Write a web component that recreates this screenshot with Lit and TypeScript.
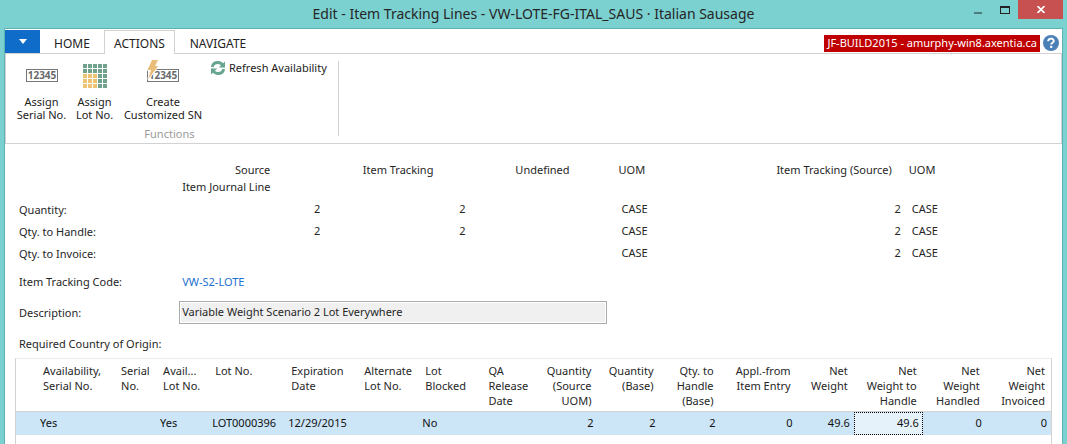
import { LitElement, html, css, svg } from "lit";
import { customElement } from "lit/decorators.js";
import { classMap } from "lit/directives/class-map.js";

interface Column {
  lines: string[];
  width: number;
  value: string;
  right?: boolean;
  focused?: boolean;
}

const COLUMNS: Column[] = [
  { lines: [], width: 21, value: "" },
  { lines: ["Availability,", "Serial No."], width: 78, value: "Yes" },
  { lines: ["Serial", "No."], width: 42, value: "" },
  { lines: ["Avail...", "Lot No."], width: 52, value: "Yes" },
  { lines: ["Lot No."], width: 76, value: "LOT0000396" },
  { lines: ["Expiration", "Date"], width: 73, value: "12/29/2015" },
  { lines: ["Alternate", "Lot No."], width: 61, value: "" },
  { lines: ["Lot", "Blocked"], width: 63, value: "No" },
  { lines: ["QA", "Release", "Date"], width: 53, value: "" },
  { lines: ["Quantity", "(Source", "UOM)"], width: 62, value: "2", right: true },
  { lines: ["Quantity", "(Base)"], width: 62, value: "2", right: true },
  { lines: ["Qty. to", "Handle", "(Base)"], width: 60, value: "2", right: true },
  { lines: ["Appl.-from", "Item Entry"], width: 77, value: "0", right: true },
  { lines: ["Net", "Weight"], width: 57, value: "49.6", right: true },
  { lines: ["Net", "Weight to", "Handle"], width: 69, value: "49.6", right: true, focused: true },
  { lines: ["Net", "Weight", "Handled"], width: 63, value: "0", right: true },
  { lines: ["Net", "Weight", "Invoiced"], width: 65, value: "0", right: true },
];

const SUMMARY = [
  { label: "Quantity:", source: "2", tracking: "2", tracked: "2" },
  { label: "Qty. to Handle:", source: "2", tracking: "2", tracked: "2" },
  { label: "Qty. to Invoice:", source: "", tracking: "", tracked: "2" },
];

const serialPlate = svg`
  <rect x="0.5" y="5.5" width="31" height="12" fill="#fff" stroke="#777"/>
  <text x="16" y="15" text-anchor="middle" font-family="Open Sans, sans-serif"
    font-size="10" font-weight="700" fill="#6a6a6a">12345</text>`;

const serialIcon = html`<svg width="32" height="24" viewBox="0 0 32 24" aria-hidden="true">${serialPlate}</svg>`;

const customIcon = html`<svg width="32" height="24" viewBox="0 0 32 24" aria-hidden="true" overflow="visible">
  ${serialPlate}
  <path d="M5-4H11L8 2H11.2L1 15.5L4 6H0.5Z" fill="#e9bd78" stroke="#fff" stroke-width="1.6" paint-order="stroke"/>
</svg>`;

const lotIcon = html`<svg width="24" height="24" viewBox="0 0 24 24" aria-hidden="true">
  ${[0, 1, 2, 3, 4].flatMap((row) =>
    [0, 1, 2, 3, 4].map(
      (col) => svg`<rect x=${col * 5} y=${row * 5} width="4" height="4"
        fill=${row > 1 && col < 3 ? "#eec374" : "#6fa18d"}/>`
    )
  )}
</svg>`;

const refreshIcon = html`<svg width="14" height="14" viewBox="0 0 14 14" aria-hidden="true">
  <path d="M1.3 6C1.8 3 4.2 1.5 7 1.5C9 1.5 10.5 2.4 11.5 4" fill="none" stroke="#67a58f" stroke-width="2.8"/>
  <path d="M14 0.4V6.4H7.8Z" fill="#67a58f"/>
  <path d="M12.7 8C12.2 11 9.8 12.5 7 12.5C5 12.5 3.5 11.6 2.5 10" fill="none" stroke="#67a58f" stroke-width="2.8"/>
  <path d="M0 13.6V7.6H6.2Z" fill="#67a58f"/>
</svg>`;

@customElement("app-root")
export class AppRoot extends LitElement {
  static styles = css`
    :host {
      display: block;
      font-family: "Noto Sans", "Open Sans", sans-serif;
      font-size: 11px;
      line-height: 16px;
      color: #262626;
    }
    * { box-sizing: border-box; }
    button, input {
      font: inherit;
      color: inherit;
      margin: 0;
      padding: 0;
      border: 0;
      background: none;
      border-radius: 0;
    }
    svg { display: block; flex: none; }
    .window {
      min-height: 100vh;
      background: #7bd0d0;
      display: flex;
      flex-direction: column;
    }
    .titlebar {
      display: grid;
      grid-template-columns: 1fr auto 1fr;
      height: 28px;
      padding: 0 4px;
    }
    .title {
      grid-column: 2;
      margin: 0;
      font-size: 14px;
      font-weight: 400;
      line-height: 28px;
      white-space: nowrap;
    }
    .controls {
      display: flex;
      justify-content: flex-end;
      align-items: flex-start;
    }
    .control {
      width: 27px;
      height: 19px;
      display: grid;
      place-items: center;
    }
    .close { width: 45px; background: #c75050; }
    .client {
      flex: 1;
      display: flex;
      flex-direction: column;
      margin: 0 4px;
      border: 1px solid #5fb2b2;
      border-bottom: 0;
      background: #fff;
    }
    .tabs {
      display: flex;
      height: 25px;
      padding-top: 1px;
      border-bottom: 1px solid #d2d2d2;
      color: #222;
    }
    .file {
      width: 35px;
      display: grid;
      place-items: center;
      background: #0f6cc8;
    }
    .tab { height: 24px; padding: 3px 0 0; color: #222; font-size: 12px; }
    .home { width: 64px; }
    .actions {
      width: 71px;
      border: 1px solid #d2d2d2;
      border-bottom: 0;
      background: #fff;
      padding-top: 2px;
    }
    .navigate { width: 86px; }
    .status {
      margin-left: auto;
      padding: 5px 3px 0 0;
      display: flex;
      gap: 3px;
    }
    .server {
      height: 17px;
      padding: 0 3px;
      background: #c00000;
      color: #fff;
      white-space: nowrap;
    }
    .help { width: 16px; height: 16px; }
    .ribbon {
      display: flex;
      height: 90px;
      border: 1px solid #d2d2d2;
      border-top: 0;
      padding: 7px 0 3px 6px;
      color: #222;
    }
    .group {
      display: flex;
      flex-direction: column;
      justify-content: space-between;
      padding-right: 11px;
    }
    .divider { width: 1px; height: 75px; background: #d2d2d2; }
    .commands { display: flex; align-items: flex-start; height: 63px; }
    .command {
      display: flex;
      flex-direction: column;
      align-items: center;
      gap: 7px;
      padding-top: 3px;
      line-height: 13px;
      white-space: nowrap;
    }
    .serial { width: 59px; }
    .lot { width: 47px; }
    .custom { width: 90px; }
    .refresh {
      display: flex;
      align-items: center;
      gap: 4px;
      padding-left: 3px;
      height: 14px;
      white-space: nowrap;
    }
    .caption { text-align: center; line-height: 12px; color: #9a9a9a; }
    .page { flex: 1; display: flex; flex-direction: column; padding: 18px 10px 0; }
    .form { padding: 0 4px; }
    table { border-collapse: separate; border-spacing: 0; table-layout: fixed; width: 100%; }
    th { font-weight: 400; text-align: left; padding: 0; }
    td { padding: 0; }
    .summary { white-space: nowrap; }
    .summary th, .summary td { height: 22px; }
    .summary thead th { height: 16px; }
    .summary .sub th { height: 21px; vertical-align: bottom; padding-bottom: 4px; }
    .summary td { padding-bottom: 2px; }
    .summary .num { text-align: right; }
    .summary .source-head { text-align: right; padding-right: 50px; }
    .summary .indent-head { text-align: right; padding-right: 32px; }
    .summary .undefined-head { text-align: right; padding-right: 41px; }
    .summary .tracked-head { text-align: right; padding-right: 9px; }
    .summary .uom-head { padding-left: 8px; }
    .summary .uom { padding-left: 11px; }
    .field {
      display: grid;
      grid-template-columns: 160fr 427fr 441fr;
      align-items: center;
    }
    .code { height: 22px; margin-top: 6px; }
    .code a { color: #1a6fd0; text-decoration: none; padding-left: 3px; }
    .description { margin-top: 8px; height: 23px; }
    .description input {
      height: 23px;
      width: 100%;
      border: 1px solid #ababab;
      padding: 0 2px 2px;
      background: #f0f0f0;
      box-shadow: inset 0 0 0 1px #fff;
    }
    .origin { margin: 12px 0 6px; }
    .lines {
      flex: 1;
      border: 1px solid #d2d2d2;
      border-top-color: #ececec;
      border-bottom: 0;
    }
    .lines th {
      height: 53px;
      padding: 4px 6px 3px;
      line-height: 15px;
      vertical-align: top;
      white-space: nowrap;
      border-bottom: 1px solid #d2d2d2;
    }
    .lines td {
      height: 23px;
      padding: 0 4px 2px 3px;
      background: #cce5f7;
      color: #111;
      white-space: nowrap;
    }
    .lines .right { text-align: right; }
    .lines .focused { background: #e5f2fa; border: 1px dotted #000; padding: 0 3px 2px 2px; }
  `;

  render() {
    const total = COLUMNS.reduce((sum, c) => sum + c.width, 0);
    return html`
      <div class="window">
        <header class="titlebar">
          <h1 class="title">Edit - Item Tracking Lines - VW-LOTE-FG-ITAL_SAUS · Italian Sausage</h1>
          <div class="controls">
            <button class="control" aria-label="Minimize">
              <svg width="10" height="10"><rect x="1" y="7" width="8" height="2" fill="#4d7c7c"/></svg>
            </button>
            <button class="control" aria-label="Maximize">
              <svg width="10" height="8"><path d="M0 0H10V8H0ZM1 2V7H9V2Z" fill="#222" fill-rule="evenodd"/></svg>
            </button>
            <button class="control close" aria-label="Close">
              <svg width="8" height="7"><path d="M0.5 0L7.5 7M7.5 0L0.5 7" stroke="#fff" stroke-width="1.7"/></svg>
            </button>
          </div>
        </header>
        <main class="client">
          <nav class="tabs">
            <button class="file" aria-label="Application menu">
              <svg width="8" height="5"><path d="M0 0H8L4 5Z" fill="#fff"/></svg>
            </button>
            <button class="tab home">HOME</button>
            <button class="tab actions">ACTIONS</button>
            <button class="tab navigate">NAVIGATE</button>
            <div class="status">
              <span class="server">JF-BUILD2015 - amurphy-win8.axentia.ca</span>
              <button class="help" aria-label="Help">
                <svg width="16" height="16" viewBox="0 0 16 16">
                  <circle cx="8" cy="8" r="8" fill="#4a7fb8"/>
                  <path d="M5.2 6.2C5.2 2.8 10.8 2.8 10.8 6C10.8 7.8 8.2 7.8 8.2 9.6" fill="none" stroke="#fff" stroke-width="2"/>
                  <rect x="7.1" y="10.8" width="2.2" height="2.1" fill="#fff"/>
                </svg>
              </button>
            </div>
          </nav>
          <section class="ribbon">
            <div class="group">
              <div class="commands">
                <button class="command serial">${serialIcon}<span>Assign<br />Serial No.</span></button>
                <button class="command lot">${lotIcon}<span>Assign<br />Lot No.</span></button>
                <button class="command custom">${customIcon}<span>Create<br />Customized SN</span></button>
                <button class="refresh">${refreshIcon}<span>Refresh Availability</span></button>
              </div>
              <div class="caption">Functions</div>
            </div>
            <div class="divider"></div>
          </section>
          <div class="page">
            <div class="form">
              <table class="summary">
                <colgroup>
                  ${[163, 138, 145, 145, 135, 155, 147].map(
                    (w) => html`<col style="width:${(w / 1028) * 100}%" />`
                  )}
                </colgroup>
                <thead>
                  <tr>
                    <th></th>
                    <th class="source-head">Source</th>
                    <th class="indent-head">Item Tracking</th>
                    <th class="undefined-head">Undefined</th>
                    <th class="uom-head">UOM</th>
                    <th class="tracked-head">Item Tracking (Source)</th>
                    <th class="uom-head">UOM</th>
                  </tr>
                  <tr class="sub">
                    <th></th>
                    <th>Item Journal Line</th>
                    <th colspan="5"></th>
                  </tr>
                </thead>
                <tbody>
                  ${SUMMARY.map(
                    (r) => html`<tr>
                      <th scope="row">${r.label}</th>
                      <td class="num">${r.source}</td>
                      <td class="num">${r.tracking}</td>
                      <td></td>
                      <td class="uom">CASE</td>
                      <td class="num">${r.tracked}</td>
                      <td class="uom">CASE</td>
                    </tr>`
                  )}
                </tbody>
              </table>
              <div class="field code">
                <span>Item Tracking Code:</span>
                <a href="#">VW-S2-LOTE</a>
              </div>
              <div class="field description">
                <label for="description">Description:</label>
                <input id="description" readonly .value=${"Variable Weight Scenario 2 Lot Everywhere"} />
              </div>
              <div class="origin">Required Country of Origin:</div>
            </div>
            <div class="lines">
              <table>
                <colgroup>
                  ${COLUMNS.map((c) => html`<col style="width:${(c.width / total) * 100}%" />`)}
                </colgroup>
                <thead>
                  <tr>
                    ${COLUMNS.map(
                      (c) => html`<th class=${classMap({ right: !!c.right })}>
                        ${c.lines.map((l, i) => html`${i ? html`<br />` : ""}${l}`)}
                      </th>`
                    )}
                  </tr>
                </thead>
                <tbody>
                  <tr>
                    ${COLUMNS.map(
                      (c) => html`<td class=${classMap({ right: !!c.right, focused: !!c.focused })}>${c.value}</td>`
                    )}
                  </tr>
                </tbody>
              </table>
            </div>
          </div>
        </main>
      </div>
    `;
  }
}
